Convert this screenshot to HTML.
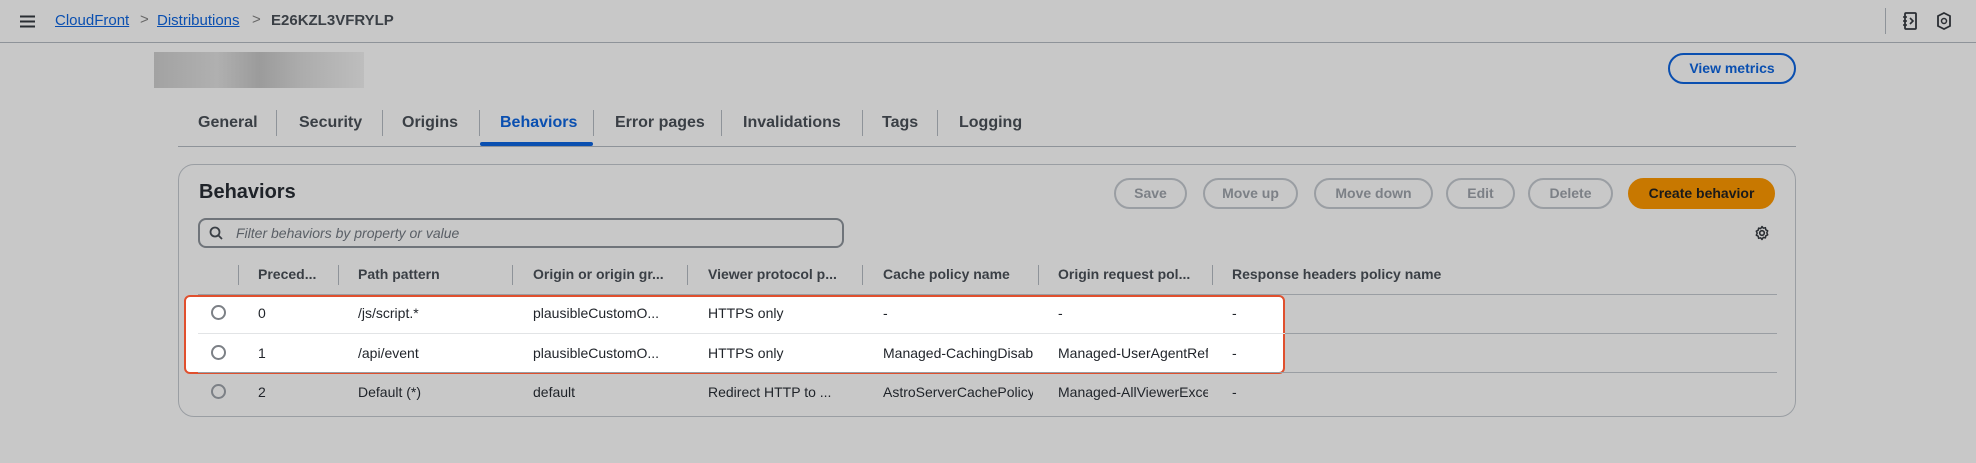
<!DOCTYPE html>
<html><head><meta charset="utf-8"><style>
*{box-sizing:border-box;margin:0;padding:0}
body{width:1976px;height:463px;background:#c8c8c8;font-family:"Liberation Sans",sans-serif;color:#1f2329;position:relative;overflow:hidden;font-size:14px}
.a{position:absolute;white-space:nowrap}
.link{color:#0a4fb0;text-decoration:underline}
.tab{font-size:16px;font-weight:bold;color:#3a3f45;top:114px}
.vs{position:absolute;width:1px;background:#8e9399}
.btn{position:absolute;top:178px;height:31px;border:2px solid #9a9ea3;border-radius:16px;color:#7c8086;font-weight:bold;font-size:14px;text-align:center;line-height:27px}
.th{top:266px;font-weight:bold;font-size:14px;color:#3a3f45}
.td{font-size:14px;color:#1f2329}
.radio{position:absolute;width:15px;height:15px;border:2px solid #7c8086;border-radius:50%;left:211px}
</style></head><body>
<svg class="a" style="left:20px;top:15px" width="15" height="13" viewBox="0 0 15 13"><path d="M0 1.5h15M0 6.5h15M0 11.5h15" stroke="#2a2e33" stroke-width="2"/></svg>
<div class="a link" style="left:55px;top:12px;font-size:15px">CloudFront</div>
<div class="a" style="left:140px;top:11px;font-size:15px;color:#666">&gt;</div>
<div class="a link" style="left:157px;top:12px;font-size:15px">Distributions</div>
<div class="a" style="left:252px;top:11px;font-size:15px;color:#666">&gt;</div>
<div class="a" style="left:271px;top:12px;font-size:15px;color:#3a3f45;font-weight:bold">E26KZL3VFRYLP</div>
<div class="vs" style="left:1885px;top:8px;height:26px"></div>
<svg class="a" style="left:1902px;top:12px" width="16" height="18" viewBox="0 0 16 18"><rect x="3" y="1" width="11" height="16" rx="1" fill="none" stroke="#2a2e33" stroke-width="1.8"/><path d="M1 5h4M1 9h4M1 13h4M8 6l3 3-3 3" fill="none" stroke="#2a2e33" stroke-width="1.6"/></svg>
<svg class="a" style="left:1937px;top:12px" width="14" height="18" viewBox="0 0 14 18"><path d="M7 1l6 3v10l-6 3-6-3V4z" fill="none" stroke="#2a2e33" stroke-width="1.8"/><circle cx="7" cy="9" r="2.5" fill="none" stroke="#2a2e33" stroke-width="1.5"/></svg>
<div style="position:absolute;left:0;top:42px;width:1976px;height:1px;background:#8e9399"></div>
<div class="a" style="left:154px;top:52px;width:210px;height:36px;background:linear-gradient(90deg,#999,#aaa 30%,#909090 50%,#a5a5a5 70%,#bbb);opacity:.8"></div>
<div class="a" style="left:1668px;top:53px;width:128px;height:31px;border:2px solid #0a4fb0;border-radius:16px;color:#0a4fb0;font-weight:bold;font-size:14px;text-align:center;line-height:27px">View metrics</div>
<div class="a tab" style="left:198px">General</div>
<div class="a tab" style="left:299px">Security</div>
<div class="a tab" style="left:402px">Origins</div>
<div class="a tab" style="left:500px;color:#0a4fb0">Behaviors</div>
<div class="a tab" style="left:615px">Error pages</div>
<div class="a tab" style="left:743px">Invalidations</div>
<div class="a tab" style="left:882px">Tags</div>
<div class="a tab" style="left:959px">Logging</div>
<div class="vs" style="left:276px;top:110px;height:26px"></div><div class="vs" style="left:382px;top:110px;height:26px"></div><div class="vs" style="left:479px;top:110px;height:26px"></div><div class="vs" style="left:593px;top:110px;height:26px"></div><div class="vs" style="left:721px;top:110px;height:26px"></div><div class="vs" style="left:862px;top:110px;height:26px"></div><div class="vs" style="left:937px;top:110px;height:26px"></div>
<div class="a" style="left:480px;top:142px;width:113px;height:4px;background:#0a4fb0;border-radius:2px"></div>
<div class="a" style="left:178px;top:146px;width:1618px;height:1px;background:#8e9399"></div>
<div class="a" style="left:178px;top:164px;width:1618px;height:253px;border:1px solid #9a9ea3;border-radius:16px"></div>
<div class="a" style="left:199px;top:181px;font-size:20px;font-weight:bold;color:#1f2329">Behaviors</div>
<div class="btn" style="left:1114px;width:73px">Save</div>
<div class="btn" style="left:1203px;width:95px">Move up</div>
<div class="btn" style="left:1314px;width:119px">Move down</div>
<div class="btn" style="left:1446px;width:69px">Edit</div>
<div class="btn" style="left:1528px;width:85px">Delete</div>
<div class="btn" style="left:1628px;width:147px;background:#c87800;border-color:#c87800;color:#1a1a1a">Create behavior</div>
<div class="a" style="left:198px;top:218px;width:646px;height:30px;border:2px solid #6f747a;border-radius:8px"></div>
<svg class="a" style="left:209px;top:226px" width="14" height="14" viewBox="0 0 14 14"><circle cx="6" cy="6" r="4.5" fill="none" stroke="#3a3f45" stroke-width="1.8"/><path d="M9.5 9.5L13 13" stroke="#3a3f45" stroke-width="1.8"/></svg>
<div class="a" style="left:236px;top:225px;font-style:italic;color:#5a5f66;font-size:14px">Filter behaviors by property or value</div>
<svg class="a" style="left:1754px;top:225px" width="16" height="16" viewBox="0 0 16 16"><circle cx="8" cy="8" r="2.3" fill="none" stroke="#2a2e33" stroke-width="1.6"/><path d="M8 1.5l1.3 1.7 2.1-.5.4 2.1 1.9 1-.9 2 .9 2-1.9 1-.4 2.1-2.1-.5L8 14.5l-1.3-1.7-2.1.5-.4-2.1-1.9-1 .9-2-.9-2 1.9-1 .4-2.1 2.1.5z" fill="none" stroke="#2a2e33" stroke-width="1.5" stroke-linejoin="round"/></svg>
<div class="vs" style="left:238px;top:265px;height:20px"></div><div class="vs" style="left:338px;top:265px;height:20px"></div><div class="vs" style="left:512px;top:265px;height:20px"></div><div class="vs" style="left:687px;top:265px;height:20px"></div><div class="vs" style="left:862px;top:265px;height:20px"></div><div class="vs" style="left:1038px;top:265px;height:20px"></div><div class="vs" style="left:1212px;top:265px;height:20px"></div>
<div class="a th" style="left:258px">Preced...</div>
<div class="a th" style="left:358px">Path pattern</div>
<div class="a th" style="left:533px">Origin or origin gr...</div>
<div class="a th" style="left:708px">Viewer protocol p...</div>
<div class="a th" style="left:883px">Cache policy name</div>
<div class="a th" style="left:1058px">Origin request pol...</div>
<div class="a th" style="left:1232px">Response headers policy name</div>
<div class="a" style="left:198px;top:294px;width:1579px;height:1px;background:#9a9ea3"></div>
<div class="a" style="left:184px;top:295px;width:1101px;height:79px;background:#fff;border:2px solid #e0502e;border-radius:6px"></div>
<div class="a" style="left:198px;top:333px;width:1579px;height:1px;background:#e2e4e6"></div>
<div class="a" style="left:1285px;top:333px;width:492px;height:1px;background:#9a9ea3"></div>
<div class="a" style="left:198px;top:372px;width:1579px;height:1px;background:#9a9ea3"></div>
<div class="radio" style="top:305px"></div><div class="radio" style="top:345px"></div><div class="radio" style="top:384px"></div>
<div class="a td" style="left:258px;top:305px">0</div><div class="a td" style="left:358px;top:305px">/js/script.*</div><div class="a td" style="left:533px;top:305px">plausibleCustomO...</div><div class="a td" style="left:708px;top:305px">HTTPS only</div><div class="a td" style="left:883px;top:305px">-</div><div class="a td" style="left:1058px;top:305px">-</div><div class="a td" style="left:1232px;top:305px">-</div>
<div class="a td" style="left:258px;top:345px">1</div><div class="a td" style="left:358px;top:345px">/api/event</div><div class="a td" style="left:533px;top:345px">plausibleCustomO...</div><div class="a td" style="left:708px;top:345px">HTTPS only</div><div class="a td" style="left:883px;top:345px;width:150px;overflow:hidden">Managed-CachingDisabled</div><div class="a td" style="left:1058px;top:345px;width:150px;overflow:hidden">Managed-UserAgentReferer</div><div class="a td" style="left:1232px;top:345px">-</div>
<div class="a td" style="left:258px;top:384px">2</div><div class="a td" style="left:358px;top:384px">Default (*)</div><div class="a td" style="left:533px;top:384px">default</div><div class="a td" style="left:708px;top:384px">Redirect HTTP to ...</div><div class="a td" style="left:883px;top:384px;width:150px;overflow:hidden">AstroServerCachePolicy-</div><div class="a td" style="left:1058px;top:384px;width:150px;overflow:hidden">Managed-AllViewerExcept</div><div class="a td" style="left:1232px;top:384px">-</div>
</body></html>
